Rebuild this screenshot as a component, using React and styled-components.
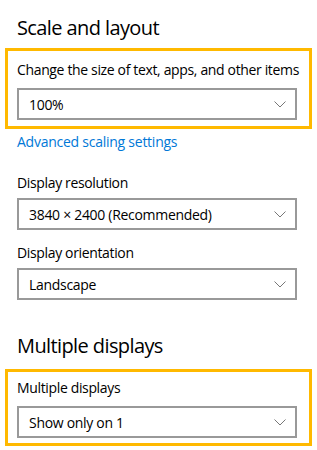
import React from "react";
import styled, { createGlobalStyle } from "styled-components";

const GlobalStyle = createGlobalStyle`
  body {
    margin: 0;
    background: #ffffff;
    font-family: "Open Sans", "Noto Sans", sans-serif;
    color: #000000;
  }
`;

const Page = styled.div`
  width: 317px;
  height: 450px;
  box-sizing: border-box;
  padding: 14px 5px 0 5px;
  background: #ffffff;
  overflow: hidden;
`;

const Heading = styled.h2`
  margin: ${(p) => p.$top || 0}px 0 0 12px;
  font-size: 20px;
  line-height: 28px;
  font-weight: 400;
  letter-spacing: -0.6px;
  color: #000000;
`;

const Highlight = styled.div`
  margin-top: ${(p) => p.$top}px;
  border: 3px solid #ffb900;
  padding: ${(p) => p.$pad}px 10px ${(p) => p.$bottom}px 9px;
`;

const Group = styled.div`
  padding-left: 12px;
  margin-top: ${(p) => p.$top}px;
`;

const Label = styled.div`
  font-size: 14px;
  line-height: 20px;
  letter-spacing: -0.35px;
  white-space: nowrap;
  color: #000000;
  margin-bottom: ${(p) => p.$gap}px;
`;

const Select = styled.div`
  width: 280px;
  height: 32px;
  box-sizing: border-box;
  border: 2px solid #999999;
  background: #ffffff;
  display: flex;
  align-items: center;
  justify-content: space-between;
  padding: 0 9px 0 10px;
  font-size: 14px;
  letter-spacing: -0.3px;
  color: #000000;
`;

const Chevron = styled.svg`
  width: 12px;
  height: 7px;
  flex-shrink: 0;
`;

const Link = styled.a`
  display: block;
  margin: 3px 0 0 12px;
  font-size: 14px;
  line-height: 20px;
  letter-spacing: -0.25px;
  color: #0078d7;
  text-decoration: none;
`;

const Dropdown = ({ value }) => (
  <Select>
    <span>{value}</span>
    <Chevron viewBox="0 0 12 7">
      <polyline points="0.5,0.5 6,6 11.5,0.5" fill="none" stroke="#777" strokeWidth="1" />
    </Chevron>
  </Select>
);

export default function App() {
  return (
    <Page>
      <GlobalStyle />
      <Heading>Scale and layout</Heading>
      <Highlight $top={6} $pad={9} $bottom={6}>
        <Label $gap={8}>Change the size of text, apps, and other items</Label>
        <Dropdown value="100%" />
      </Highlight>
      <Link href="#">Advanced scaling settings</Link>

      <Group $top={21}>
        <Label $gap={5}>Display resolution</Label>
        <Dropdown value="3840 × 2400 (Recommended)" />
      </Group>
      <Group $top={13}>
        <Label $gap={5}>Display orientation</Label>
        <Dropdown value="Landscape" />
      </Group>

      <Heading $top={32}>Multiple displays</Heading>
      <Highlight $top={9} $pad={6} $bottom={5}>
        <Label $gap={8}>Multiple displays</Label>
        <Dropdown value="Show only on 1" />
      </Highlight>
    </Page>
  );
}
